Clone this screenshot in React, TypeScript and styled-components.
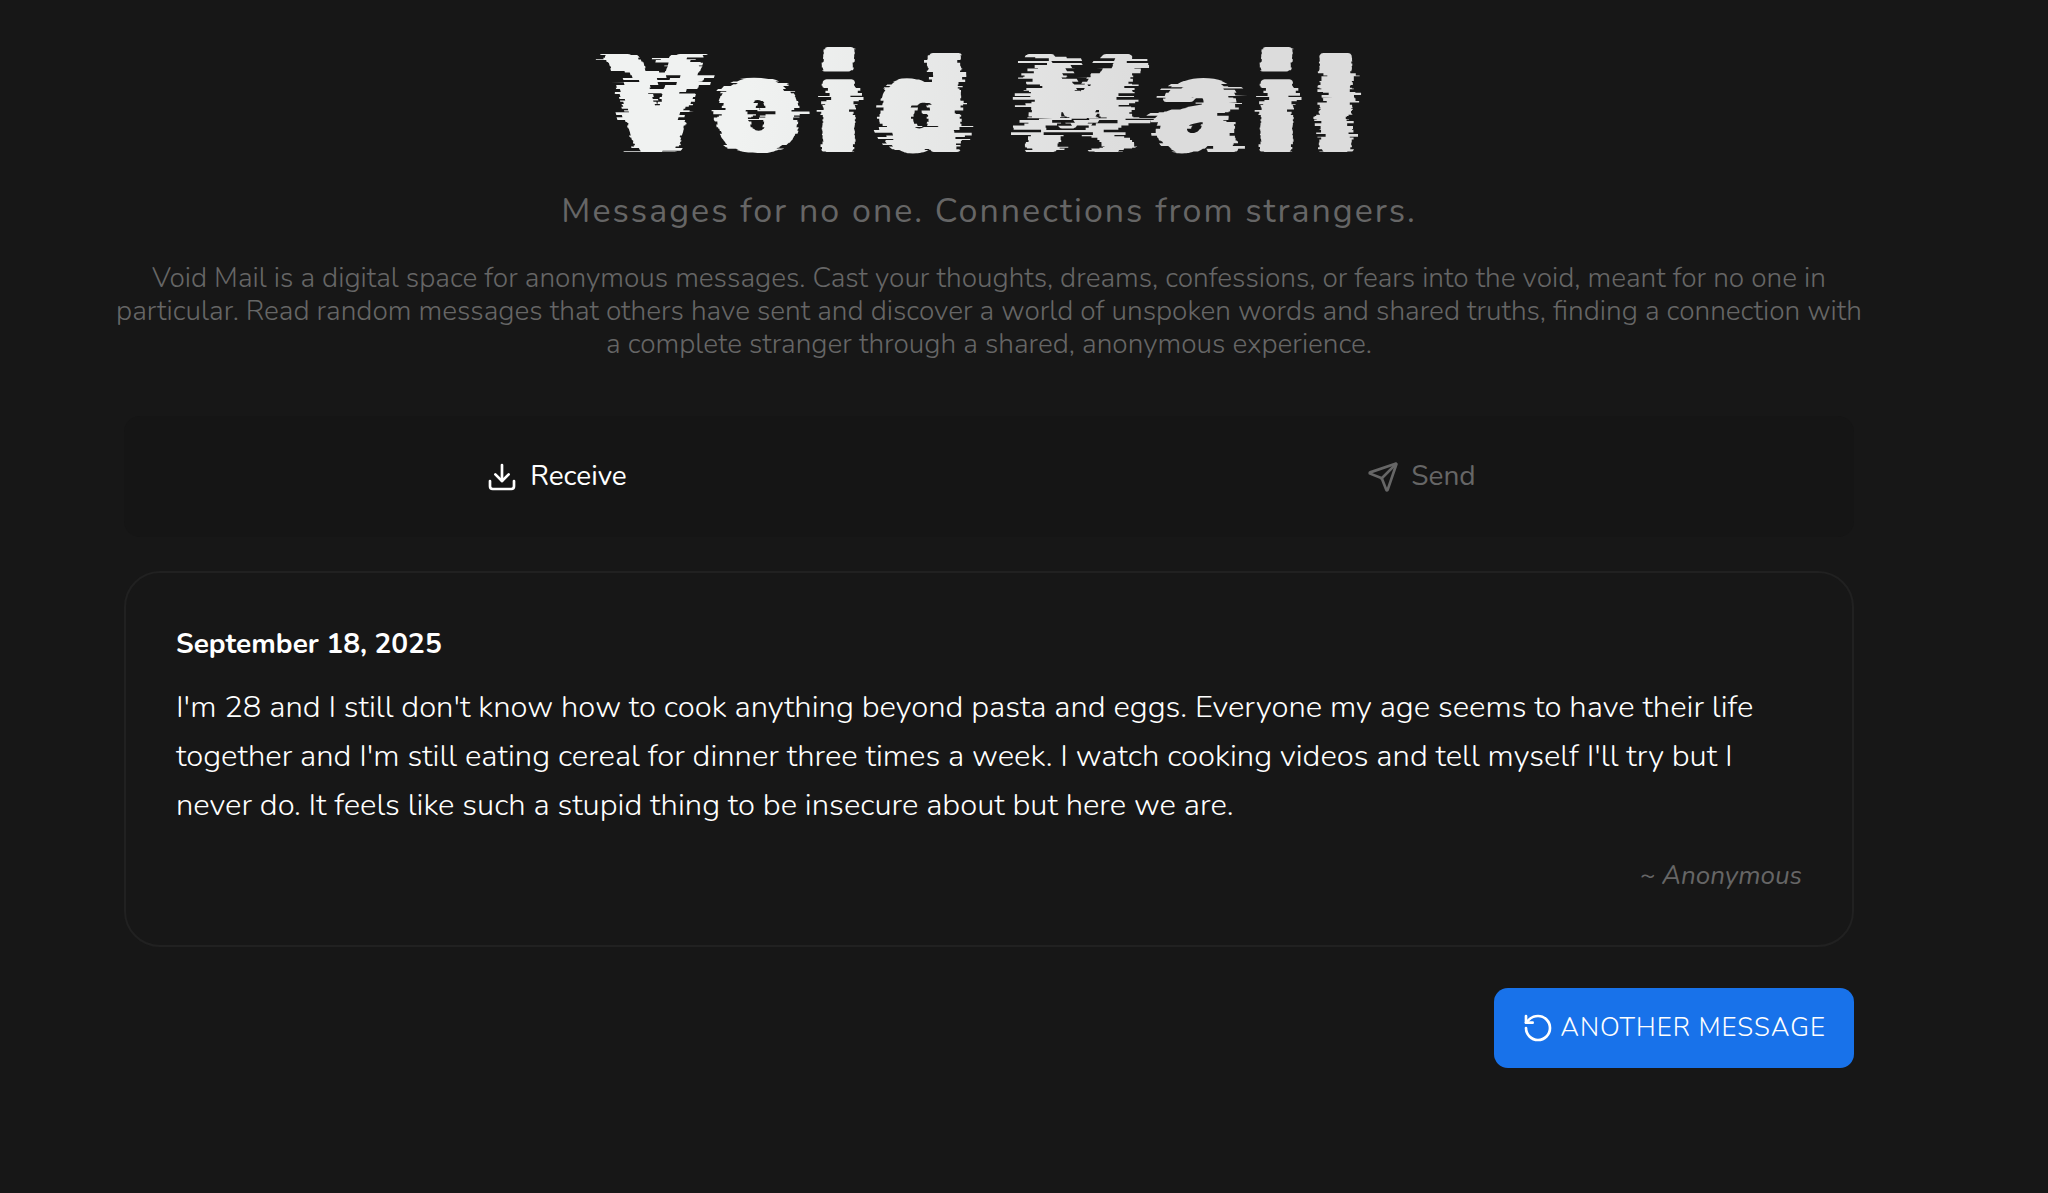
import React, { useState } from 'react';
import styled, { createGlobalStyle } from 'styled-components';
import { Download, RotateCcw, Send } from 'lucide-react';

const GlobalStyle = createGlobalStyle`
  * { box-sizing: border-box; }
  body {
    margin: 0;
    background: #171717;
    color: #fff;
    font-family: Nunito, Lato, sans-serif;
  }
  button { font: inherit; cursor: pointer; }
`;

const Page = styled.main`
  display: flex;
  flex-direction: column;
  padding: 41px 194px 125px 124px;
`;

const Header = styled.header`
  display: flex;
  flex-direction: column;
  align-items: center;
  text-align: center;
  margin-bottom: 55px;
`;

const Title = styled.h1`
  margin: 0;
  padding: 0 12px;
  font-family: 'Rubik Glitch', Rubik, Inter, sans-serif;
  font-size: 139px;
  font-weight: 400;
  line-height: 128px;
  letter-spacing: 14px;
  white-space: nowrap;
  color: transparent;
  background: linear-gradient(100deg, #f0f2f1 20%, #dcdcdc 70%);
  -webkit-background-clip: text;
  background-clip: text;
`;

const Tagline = styled.p`
  margin: 21px 0 30px;
  color: #666;
  font-size: 34px;
  line-height: 42px;
  letter-spacing: 2px;
`;

const Description = styled.p`
  margin: 0 -10px;
  color: #666;
  font-size: 28px;
  font-weight: 300;
  line-height: 33px;
`;

const Tabs = styled.div`
  display: flex;
  background: #151515;
  border-radius: 16px;
  margin-bottom: 34px;
`;

const Tab = styled.button<{ $active: boolean }>`
  flex: 1;
  display: flex;
  align-items: center;
  justify-content: center;
  gap: 12px;
  padding: 44px 16px;
  border: 0;
  background: none;
  color: ${(p) => (p.$active ? '#fff' : '#666')};
  font-size: 28px;
  line-height: 33px;
`;

const Card = styled.article`
  padding: 53px 50px 49px;
  border: 2px solid #212121;
  border-radius: 36px;
`;

const MessageDate = styled.time`
  display: block;
  margin-bottom: 21px;
  font-size: 28px;
  font-weight: 700;
  line-height: 36px;
`;

const MessageText = styled.p`
  margin: 0 0 26px;
  font-size: 31px;
  font-weight: 300;
  line-height: 49px;
`;

const Author = styled.p`
  margin: 0;
  color: #666;
  font-size: 26px;
  font-style: italic;
  line-height: 40px;
  text-align: right;
`;

const RefreshButton = styled.button`
  align-self: flex-end;
  display: flex;
  align-items: center;
  gap: 6px;
  margin-top: 41px;
  padding: 24px 28px;
  border: 0;
  border-radius: 14px;
  background: #1872ea;
  color: #fff;
  font-size: 26px;
  font-weight: 300;
  line-height: 32px;
  letter-spacing: 1px;
  text-transform: uppercase;
`;

export default function App() {
  const [tab, setTab] = useState<'receive' | 'send'>('receive');
  return (
    <>
      <GlobalStyle />
      <Page>
        <Header>
          <Title>Void Mail</Title>
          <Tagline>Messages for no one. Connections from strangers.</Tagline>
          <Description>
            Void Mail is a digital space for anonymous messages. Cast your thoughts, dreams, confessions, or
            fears into the void, meant for no one in particular. Read random messages that others have sent
            and discover a world of unspoken words and shared truths, finding a connection with a complete
            stranger through a shared, anonymous experience.
          </Description>
        </Header>
        <Tabs role="tablist">
          <Tab role="tab" aria-selected={tab === 'receive'} $active={tab === 'receive'} onClick={() => setTab('receive')}>
            <Download size={32} />
            Receive
          </Tab>
          <Tab role="tab" aria-selected={tab === 'send'} $active={tab === 'send'} onClick={() => setTab('send')}>
            <Send size={32} />
            Send
          </Tab>
        </Tabs>
        <Card>
          <MessageDate dateTime="2025-09-18">September 18, 2025</MessageDate>
          <MessageText>
            I'm 28 and I still don't know how to cook anything beyond pasta and eggs. Everyone my age seems
            to have their life together and I'm still eating cereal for dinner three times a week. I watch
            cooking videos and tell myself I'll try but I never do. It feels like such a stupid thing to be
            insecure about but here we are.
          </MessageText>
          <Author>~ Anonymous</Author>
        </Card>
        <RefreshButton type="button">
          <RotateCcw size={32} />
          Another message
        </RefreshButton>
      </Page>
    </>
  );
}
